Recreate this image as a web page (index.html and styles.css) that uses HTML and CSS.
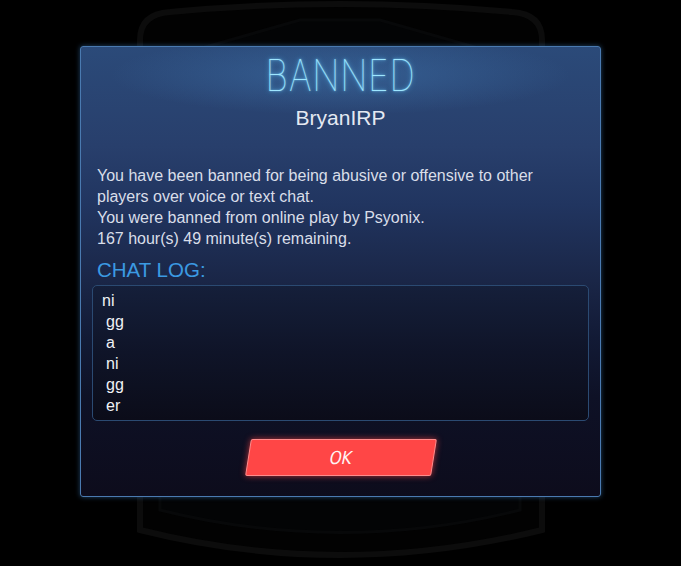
FILE: index.html
```html
<!DOCTYPE html>
<html>
<head>
<meta charset="utf-8">
<link rel="stylesheet" href="styles.css">
</head>
<body>
<svg class="backdrop" width="681" height="566" viewBox="0 0 681 566">
  <path d="M140 40 Q140 14 170 12 Q340 -4 512 12 Q542 14 542 40 L542 530 Q340 580 140 530 Z" fill="#020202" stroke="#0c0c0c" stroke-width="6"/>
  <path d="M160 60 L300 20 L380 20 L520 60 L520 510 Q340 555 160 510 Z" fill="#030405" stroke="#070809" stroke-width="3"/>
</svg>
<main class="dialog">
  <h1 class="title">BANNED</h1>
  <h2 class="player">BryanIRP</h2>
  <p class="message">You have been banned for being abusive or offensive to other players over voice or text chat.<br>You were banned from online play by Psyonix.<br>167 hour(s) 49 minute(s) remaining.</p>
  <h3 class="log-label">CHAT LOG:</h3>
  <div class="log">
    <div class="log-line">ni</div>
    <div class="log-line indent">gg</div>
    <div class="log-line indent">a</div>
    <div class="log-line indent">ni</div>
    <div class="log-line indent">gg</div>
    <div class="log-line indent">er</div>
  </div>
  <div class="actions">
    <button class="ok-btn"><span class="ok-label">OK</span></button>
  </div>
</main>
</body>
</html>
```
FILE: styles.css
```css
html, body {
  margin: 0;
  padding: 0;
  background: #000;
  width: 681px;
  height: 566px;
  overflow: hidden;
}
body {
  position: relative;
  display: flex;
  justify-content: center;
  align-items: flex-start;
  padding-top: 46px;
  box-sizing: border-box;
  font-family: "Liberation Sans", Arial, sans-serif;
}
.backdrop {
  position: absolute;
  left: 0;
  top: 0;
}
.dialog {
  position: relative;
  width: 521px;
  height: 451px;
  box-sizing: border-box;
  padding: 6px 11px 0 11px;
  border: 1px solid #4a7ab0;
  border-radius: 3px;
  background:
    radial-gradient(ellipse 230px 40px at 50% 28px, rgba(70,130,190,0.4), rgba(70,130,190,0) 100%),
    linear-gradient(to bottom, #2b4a79 0%, #283f6c 22%, #213560 35%, #1a2647 52%, #121a35 65%, #0e1126 78%, #0d0c1c 100%);
  box-shadow: 0 0 5px rgba(70,150,230,0.45);
  display: flex;
  flex-direction: column;
}
.title {
  margin: 0;
  height: 44px;
  font-family: "Inter", sans-serif;
  font-weight: 100;
  font-size: 44px;
  line-height: 44px;
  text-align: center;
  color: #9ee6ff;
  letter-spacing: 1px;
  transform: scaleX(0.8);
  text-shadow: 0 0 6px rgba(90,200,255,0.9), 0 0 2px rgba(140,220,255,0.9);
}
.player {
  margin: 9px 0 0 0;
  font-weight: normal;
  font-size: 21px;
  line-height: 24px;
  text-align: center;
  color: #e4e9f2;
}
.message {
  margin: 35px 0 0 0;
  padding: 0 20px 0 5px;
  font-size: 16px;
  line-height: 21px;
  color: #d9dee9;
}
.log-label {
  margin: 10px 0 0 5px;
  font-weight: normal;
  font-size: 20.5px;
  line-height: 22px;
  color: #3b9ae2;
}
.log {
  margin-top: 4px;
  height: 136px;
  box-sizing: border-box;
  padding: 4px 9px 0 9px;
  border: 1px solid #2b4a72;
  border-radius: 5px;
  background: linear-gradient(to bottom, #151f3a 0%, #0f1428 50%, #0b0c19 100%);
}
.log-line {
  font-size: 16px;
  line-height: 21px;
  color: #f0f2f6;
}
.log-line.indent {
  padding-left: 4px;
}
.actions {
  margin-top: 18px;
  display: flex;
  justify-content: center;
}
.ok-btn {
  width: 186px;
  height: 37px;
  margin-left: 1px;
  border: 1px solid #ff8c8c;
  border-radius: 2px;
  background: #ff4646;
  transform: skewX(-9deg);
  box-shadow: 0 0 6px rgba(255,70,70,0.7);
  padding: 0;
  display: flex;
  align-items: center;
  justify-content: center;
}
.ok-label {
  display: block;
  transform: skewX(-3deg) scaleX(0.85);
  font-family: "DejaVu Sans", sans-serif;
  font-size: 18px;
  color: #fff4f4;
}
```
